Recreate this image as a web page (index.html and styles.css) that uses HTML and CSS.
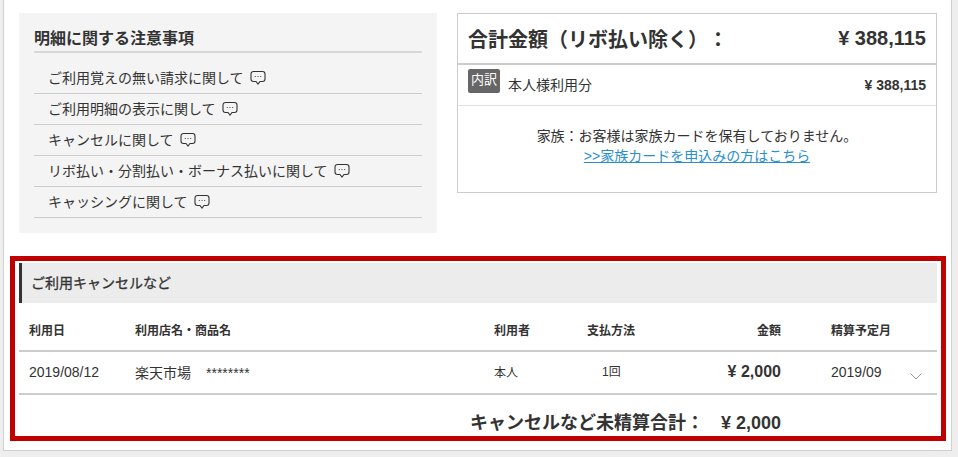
FILE: index.html
```html
<!DOCTYPE html>
<html lang="ja">
<head>
<meta charset="utf-8">
<title>ご利用明細</title>
<link rel="stylesheet" href="styles.css">
</head>
<body>
<main class="card">
  <div class="top">
    <section class="notes">
      <h2 class="notes-title">明細に関する注意事項</h2>
      <ul class="notes-list">
        <li>ご利用覚えの無い請求に関して <svg class="bubble" viewBox="0 0 16 16"><path d="M3.5 1.5h9a2.5 2.5 0 0 1 2.5 2.5v5a2.5 2.5 0 0 1-2.5 2.5H10l-2 2.500-2-2.500H3.500A2.500 2.500 0 0 1 1 9V4a2.500 2.500 0 0 1 2.500-2.500z"/><circle cx="5.300" cy="6.500" r=".6"/><circle cx="8" cy="6.500" r=".6"/><circle cx="10.700" cy="6.500" r=".6"/></svg></li>
        <li>ご利用明細の表示に関して <svg class="bubble" viewBox="0 0 16 16"><path d="M3.5 1.5h9a2.5 2.5 0 0 1 2.5 2.5v5a2.5 2.5 0 0 1-2.5 2.5H10l-2 2.500-2-2.500H3.500A2.500 2.500 0 0 1 1 9V4a2.500 2.500 0 0 1 2.500-2.500z"/><circle cx="5.300" cy="6.500" r=".6"/><circle cx="8" cy="6.500" r=".6"/><circle cx="10.700" cy="6.500" r=".6"/></svg></li>
        <li>キャンセルに関して <svg class="bubble" viewBox="0 0 16 16"><path d="M3.5 1.5h9a2.5 2.5 0 0 1 2.5 2.5v5a2.5 2.5 0 0 1-2.5 2.5H10l-2 2.500-2-2.500H3.500A2.500 2.500 0 0 1 1 9V4a2.500 2.500 0 0 1 2.500-2.500z"/><circle cx="5.300" cy="6.500" r=".6"/><circle cx="8" cy="6.500" r=".6"/><circle cx="10.700" cy="6.500" r=".6"/></svg></li>
        <li>リボ払い・分割払い・ボーナス払いに関して <svg class="bubble" viewBox="0 0 16 16"><path d="M3.5 1.5h9a2.5 2.5 0 0 1 2.5 2.5v5a2.5 2.5 0 0 1-2.5 2.5H10l-2 2.500-2-2.500H3.500A2.500 2.500 0 0 1 1 9V4a2.500 2.500 0 0 1 2.500-2.500z"/><circle cx="5.300" cy="6.500" r=".6"/><circle cx="8" cy="6.500" r=".6"/><circle cx="10.700" cy="6.500" r=".6"/></svg></li>
        <li>キャッシングに関して <svg class="bubble" viewBox="0 0 16 16"><path d="M3.5 1.5h9a2.5 2.5 0 0 1 2.5 2.5v5a2.5 2.5 0 0 1-2.5 2.5H10l-2 2.500-2-2.500H3.500A2.500 2.500 0 0 1 1 9V4a2.500 2.500 0 0 1 2.500-2.500z"/><circle cx="5.300" cy="6.500" r=".6"/><circle cx="8" cy="6.500" r=".6"/><circle cx="10.700" cy="6.500" r=".6"/></svg></li>
      </ul>
    </section>
    <section class="summary">
      <div class="total"><span>合計金額（リボ払い除く）：</span><span class="total-amount">¥ 388,115</span></div>
      <div class="detail"><span class="badge">内訳</span><span class="detail-name">本人様利用分</span><span class="detail-amount">¥ 388,115</span></div>
      <div class="family">
        <p>家族：お客様は家族カードを保有しておりません。</p>
        <a href="#">&gt;&gt;家族カードを申込みの方はこちら</a>
      </div>
    </section>
  </div>
  <section class="cancel">
    <h3 class="cancel-title">ご利用キャンセルなど</h3>
    <div class="row head">
      <span class="c-date">利用日</span><span class="c-shop">利用店名・商品名</span><span class="c-user">利用者</span><span class="c-pay">支払方法</span><span class="c-amt">金額</span><span class="c-month">精算予定月</span>
    </div>
    <div class="row body-row">
      <span class="c-date">2019/08/12</span>
      <span class="c-shop">楽天市場<span class="stars">********</span></span>
      <span class="c-user small">本人</span>
      <span class="c-pay small pay-val">1回</span>
      <span class="c-amt amt-val">¥ 2,000</span>
      <span class="c-month">2019/09</span>
      <svg class="chev" viewBox="0 0 12 7"><path d="M.5.500 6 6l5.500-5.500"/></svg>
    </div>
    <div class="sum"><span class="sum-label">キャンセルなど未精算合計：</span><span class="sum-amt">¥ 2,000</span></div>
    <div class="highlight"></div>
  </section>
</main>
</body>
</html>
```
FILE: styles.css
```css
* { box-sizing: border-box; }
html, body { margin: 0; padding: 0; }
body {
  height: 457px;
  overflow: hidden;
  background: #eeeeee;
  color: #333;
  font-family: "Liberation Sans", "Noto Sans CJK JP", sans-serif;
  font-size: 14px;
  text-spacing-trim: space-all;
}
.card {
  width: 949px;
  height: 451px;
  margin-left: 3px;
  padding: 13px 14px 0 15px;
  background: #fff;
  border: 1px solid #d0d0d0;
  border-top: 0;
}
.top { display: flex; gap: 20px; align-items: flex-start; }
.notes {
  width: 418px;
  height: 220px;
  padding: 15px 15px 0;
  background: #f4f4f4;
}
.notes-title {
  margin: 0;
  height: 25px;
  font-size: 16px;
  line-height: 21px;
  font-weight: bold;
  border-bottom: 2px solid #d8d8d8;
}
.notes-list { margin: 0; padding: 10px 0 0; list-style: none; }
.notes-list li {
  display: flex;
  align-items: center;
  gap: 6px;
  height: 31px;
  padding-left: 14px;
  padding-bottom: 2px;
  border-bottom: 1px solid #ccc;
}
.bubble { width: 16px; height: 16px; margin-top: 2px; fill: none; stroke: #333; stroke-width: 1.1; }
.bubble circle { fill: #333; stroke: none; }
.summary {
  width: 480px;
  height: 180px;
  border: 1px solid #ccc;
}
.total {
  display: flex;
  justify-content: space-between;
  align-items: center;
  height: 51px;
  padding: 0 10px 1px;
  font-size: 20px;
  font-weight: bold;
  border-bottom: 2px solid #ccc;
}
.detail {
  display: flex;
  align-items: center;
  height: 41px;
  padding: 0 10px;
  border-bottom: 1px solid #e2e2e2;
}
.badge {
  align-self: flex-start;
  margin-top: 4px;
  width: 32px;
  height: 24px;
  border-radius: 2px;
  background: #666;
  color: #fff;
  font-size: 13px;
  line-height: 22px;
  text-align: center;
}
.detail-name { margin-left: 8px; font-size: 14px; line-height: 18px; }
.detail-amount { margin-left: auto; font-size: 14px; font-weight: bold; }
.family { padding-top: 20px; text-align: center; font-size: 14px; line-height: 20px; }
.family p { margin: 0; }
.family a { color: #2a8fd0; }
.cancel { position: relative; margin-top: 23px; padding-top: 7px; }
.cancel-title {
  margin: 0;
  height: 40px;
  padding-left: 9px;
  background: #ececec;
  border-left: 3px solid #333;
  font-size: 14px;
  font-weight: normal;
  line-height: 40px;
  -webkit-text-stroke: .3px #333;
}
.row { display: flex; align-items: center; position: relative; }
.head {
  height: 49px;
  padding-top: 5px;
  border-bottom: 2px solid #ccc;
  font-size: 12px;
  font-weight: bold;
}
.body-row { height: 43px; padding-bottom: 1px; border-bottom: 2px solid #ccc; }
.row > span { flex: none; }
.c-date { width: 116px; padding-left: 10px; font-size: 14px; }
.head .c-date, .head .c-shop { font-size: 12px; }
.c-shop { width: 359px; }
.stars { margin-left: 15px; font-size: 14px; }
.c-user { width: 93px; }
.c-pay { width: 76px; }
.pay-val { padding-left: 15px; }
.c-amt { width: 118px; text-align: right; }
.c-month { width: 100px; padding-left: 50px; white-space: nowrap; }
.small { font-size: 12px; padding-bottom: 2px; }
.pay-val { padding-bottom: 4px; }
.amt-val { font-size: 16px; font-weight: bold; }
.chev { position: absolute; left: 891px; top: 21px; width: 12px; height: 7px; fill: none; stroke: #999; stroke-width: 1; }
.sum {
  display: flex;
  justify-content: flex-end;
  padding-right: 156px;
  padding-top: 17px;
  font-size: 18px;
  font-weight: bold;
  line-height: 22px;
}
.sum-amt { margin-left: 17px; }
.highlight {
  position: absolute;
  left: -9px;
  top: 0;
  width: 936px;
  height: 185px;
  border: 5px solid #c00000;
  pointer-events: none;
}
```
